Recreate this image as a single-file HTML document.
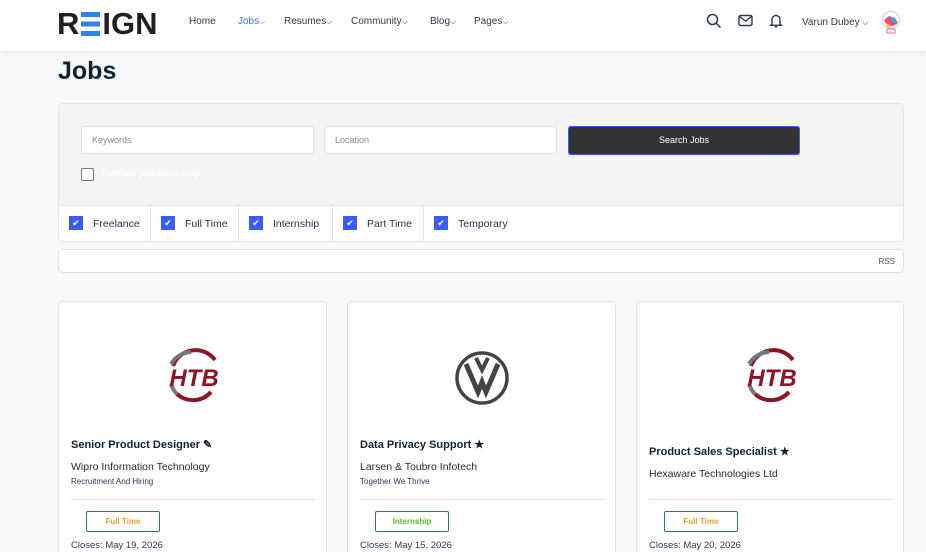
<!DOCTYPE html>
<html><head><meta charset="utf-8"><style>
*{box-sizing:border-box;margin:0;padding:0}
html,body{width:926px;height:552px;overflow:hidden}
body{background:#f7f8fa;font-family:"Liberation Sans",sans-serif;color:#1d2a3a;position:relative}
.abs{position:absolute}
header{position:absolute;left:0;top:0;width:926px;height:51px;background:#fff;box-shadow:0 2px 6px rgba(0,0,0,.08);z-index:2}
.nav{font-size:10px;color:#2c3a4b;top:16px}
.nav .c{font-size:8px}
h1{position:absolute;left:58px;top:57px;font-size:25px;font-weight:bold;color:#0f2236}
.box{left:58px;top:103px;width:846px;height:139px;border:1px solid #e2e4e8;border-radius:5px;background:#fff;overflow:hidden}
.gray{left:0;top:0;width:846px;height:102px;background:#f4f4f5;border-bottom:1px solid #e2e4e8}
.inp{background:#fff;border:1px solid #dcdfe3;border-radius:3px;height:28px;font-size:9px;color:#888;padding:8px 10px}
.cb{top:102px;height:37px;border-right:1px solid #e2e4e8;font-size:10.5px;color:#243447}
.cb i{position:absolute;top:10px;width:14px;height:14px;background:#3b5bfd;color:#fff;font-size:9px;font-style:normal;text-align:center;line-height:14px}
.card{top:301px;width:269px;height:270px;background:#fff;border:1px solid #e0e2e6;border-radius:5px}
.t{position:absolute;left:12px;font-size:11px;font-weight:bold;color:#0f2236}
.co{position:absolute;left:12px;font-size:10.5px;color:#1d2a3a}
.tg{position:absolute;left:12px;font-size:8px;color:#2c3a4b}
.hr{position:absolute;left:12px;width:244px;height:1px;background:#dcdfe3;top:197px}
.bd{position:absolute;left:27px;top:209px;width:74px;height:21px;border:1px solid #2e7d4f;border-radius:2px;font-size:8px;font-weight:bold;text-align:center;line-height:19px}
.cl{position:absolute;left:12px;top:238px;font-size:9.5px;color:#2c3a4b}
</style></head><body>
<header>
<div class="abs" style="left:57px;top:6px;font-size:31px;font-weight:900;color:#1c1f24">R<span style="display:inline-block;width:19px;height:24px;margin:0 2px;vertical-align:-2px;background:linear-gradient(#2f80f5 0 5px,transparent 5px 9.5px,#2f80f5 9.5px 14.5px,transparent 14.5px 19px,#2f80f5 19px)"></span>IGN</div>
<div class="abs nav" style="left:189px">Home</div>
<div class="abs nav" style="left:238px;color:#3b6cf6">Jobs<span class="c">⌵</span></div>
<div class="abs nav" style="left:284px">Resumes<span class="c">⌵</span></div>
<div class="abs nav" style="left:351px">Community<span class="c">⌵</span></div>
<div class="abs nav" style="left:430px">Blog<span class="c">⌵</span></div>
<div class="abs nav" style="left:474px">Pages<span class="c">⌵</span></div>
<svg class="abs" style="left:706px;top:13px" width="16" height="16" viewBox="0 0 16 16" fill="none" stroke="#2c3a4b" stroke-width="1.5"><circle cx="6.5" cy="6.5" r="5"/><path d="M10.2 10.2L14.5 14.5"/></svg>
<svg class="abs" style="left:738px;top:14px" width="15" height="13" viewBox="0 0 15 13" fill="none" stroke="#2c3a4b" stroke-width="1.4"><rect x="1" y="1.5" width="13" height="10" rx="1.5"/><path d="M1.5 2.5L7.5 7L13.5 2.5"/></svg>
<svg class="abs" style="left:769px;top:13px" width="14" height="15" viewBox="0 0 14 15" fill="none" stroke="#2c3a4b" stroke-width="1.4"><path d="M3 11V6.5a4 4 0 018 0V11l1.3 1.3H1.7z"/><path d="M5.8 13.8h2.4"/></svg>
<div class="abs nav" style="left:802px;top:17px;font-size:10px">Varun Dubey <span style="font-size:8px">⌵</span></div>
<svg class="abs" style="left:881px;top:10px" width="20" height="26" viewBox="0 0 20 26"><circle cx="10" cy="10" r="8.5" fill="#fff" stroke="#d6c7ea"/><path d="M3 10l5-4 6 2 3 5-5 3-6-1z" fill="#f24c6d"/><path d="M8 7l5 1 3 4-4 1z" fill="#2aa8f2"/><path d="M5 13l4 2 1 4-4-2z" fill="#f7c340"/><path d="M6 19h8v4H6z" fill="none" stroke="#e66cb0"/></svg>
</header>
<h1>Jobs</h1>
<div class="abs box">
<div class="abs gray"></div>
<div class="abs inp" style="left:22px;top:22px;width:233px">Keywords</div>
<div class="abs inp" style="left:265px;top:22px;width:233px">Location</div>
<div class="abs" style="left:509px;top:22px;width:232px;height:29px;background:#333;border:1px solid #3b5bfd;border-radius:3px;color:#fff;font-size:9px;text-align:center;line-height:27px">Search Jobs</div>
<div class="abs" style="left:22px;top:64px;width:13px;height:13px;border:1px solid #777;border-radius:2px;background:#fff"></div>
<div class="abs" style="left:43px;top:64px;font-size:10px;color:#fff">Remote positions only</div>
<div class="abs cb" style="left:0;width:92px"><i style="left:10px">✔</i><span class="abs" style="left:34px;top:12px">Freelance</span></div>
<div class="abs cb" style="left:92px;width:88px"><i style="left:10px">✔</i><span class="abs" style="left:34px;top:12px">Full Time</span></div>
<div class="abs cb" style="left:180px;width:94px"><i style="left:10px">✔</i><span class="abs" style="left:34px;top:12px">Internship</span></div>
<div class="abs cb" style="left:274px;width:91px"><i style="left:10px">✔</i><span class="abs" style="left:34px;top:12px">Part Time</span></div>
<div class="abs cb" style="left:365px;width:110px;border-right:none"><i style="left:10px">✔</i><span class="abs" style="left:34px;top:12px">Temporary</span></div>
</div>
<div class="abs" style="left:58px;top:249px;width:846px;height:24px;background:#fff;border:1px solid #e0e2e6;border-radius:5px"><span class="abs" style="right:8px;top:7px;font-size:8px;color:#3b5070">RSS</span></div>

<div class="abs card" style="left:58px">
<svg class="abs" style="left:102px;top:42px" width="66" height="64" viewBox="0 0 66 64"><path d="M12 22A24 24 0 0 1 54 16" fill="none" stroke="#8a1628" stroke-width="4"/><path d="M10 20A24 24 0 0 1 30 8" fill="none" stroke="#777" stroke-width="4"/><path d="M50 48A24 24 0 0 1 16 50" fill="none" stroke="#8a1628" stroke-width="4"/><path d="M16 50A24 24 0 0 1 10 40" fill="none" stroke="#777" stroke-width="4"/><text x="33" y="42" text-anchor="middle" font-family="Liberation Sans" font-weight="900" font-style="italic" font-size="24" fill="#8a1628">HTB</text></svg>
<div class="t" style="top:136px">Senior Product Designer ✎</div>
<div class="co" style="top:159px">Wipro Information Technology</div>
<div class="tg" style="top:175px">Recruitment And Hiring</div>
<div class="hr"></div><div class="bd" style="color:#e8a23a">Full Time</div>
<div class="cl">Closes: May 19, 2026</div></div>

<div class="abs card" style="left:347px">
<svg class="abs" style="left:106px;top:48px" width="56" height="56" viewBox="0 0 56 56"><circle cx="28" cy="28" r="25" fill="none" stroke="#444" stroke-width="3.5"/><path d="M12 14L24 42 28 32 32 42 44 14" fill="none" stroke="#444" stroke-width="5"/><path d="M22 8L28 20 34 8" fill="none" stroke="#444" stroke-width="4"/></svg>
<div class="t" style="top:136px">Data Privacy Support ★</div>
<div class="co" style="top:159px">Larsen &amp; Toubro Infotech</div>
<div class="tg" style="top:175px">Together We Thrive</div>
<div class="hr"></div><div class="bd" style="color:#5cb82e">Internship</div>
<div class="cl">Closes: May 15, 2026</div></div>

<div class="abs card" style="left:636px;width:268px">
<svg class="abs" style="left:102px;top:42px" width="66" height="64" viewBox="0 0 66 64"><path d="M12 22A24 24 0 0 1 54 16" fill="none" stroke="#8a1628" stroke-width="4"/><path d="M10 20A24 24 0 0 1 30 8" fill="none" stroke="#777" stroke-width="4"/><path d="M50 48A24 24 0 0 1 16 50" fill="none" stroke="#8a1628" stroke-width="4"/><path d="M16 50A24 24 0 0 1 10 40" fill="none" stroke="#777" stroke-width="4"/><text x="33" y="42" text-anchor="middle" font-family="Liberation Sans" font-weight="900" font-style="italic" font-size="24" fill="#8a1628">HTB</text></svg>
<div class="t" style="top:143px">Product Sales Specialist ★</div>
<div class="co" style="top:166px">Hexaware Technologies Ltd</div>
<div class="hr"></div><div class="bd" style="color:#e8a23a">Full Time</div>
<div class="cl">Closes: May 20, 2026</div></div>
</body></html>
